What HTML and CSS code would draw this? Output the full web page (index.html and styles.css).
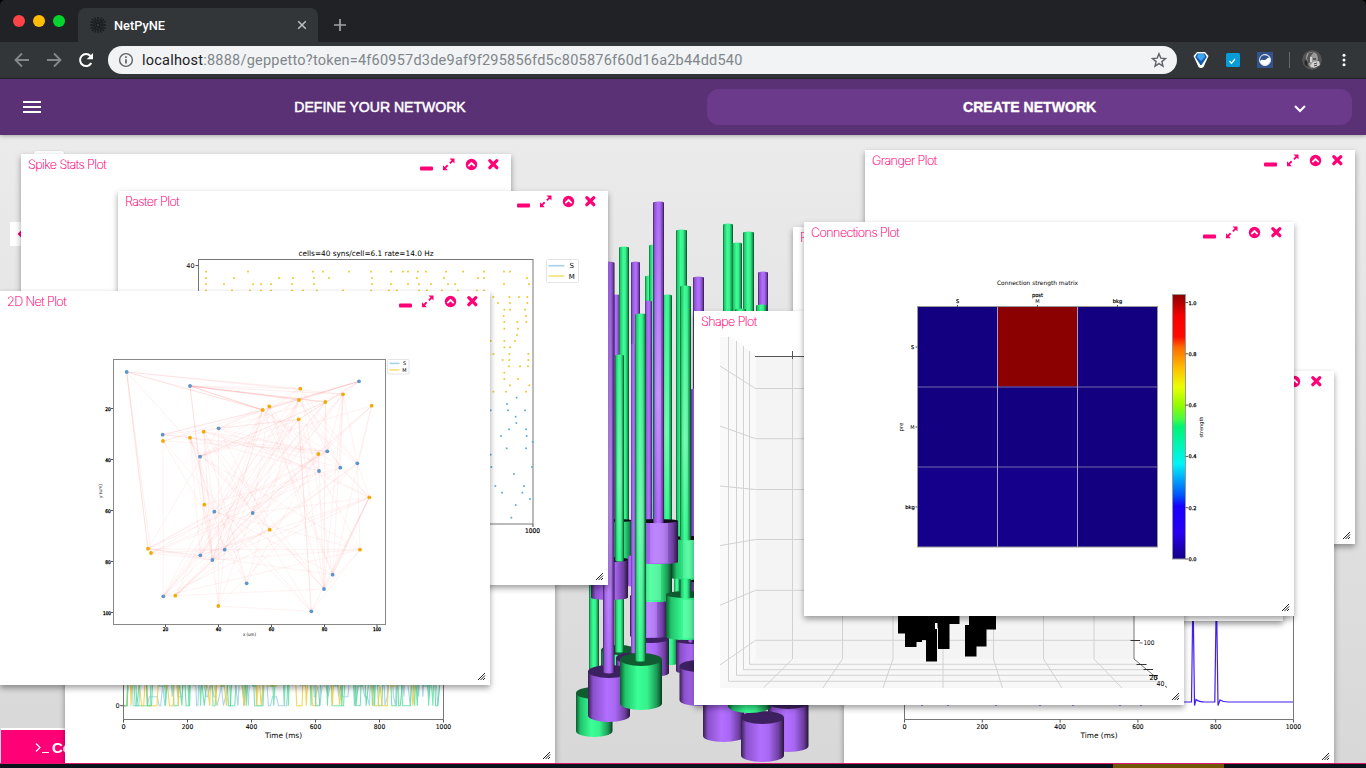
FILE: index.html
```html
<!DOCTYPE html>
<html lang="en">
<head>
<meta charset="utf-8">
<title>NetPyNE</title>
<link rel="stylesheet" href="styles.css">
</head>
<body>
<div class="browser">
  <div class="tabstrip">
    <div class="lights"><i class="red"></i><i class="amber"></i><i class="green"></i></div>
    <div class="tab">
      <svg class="favicon" width="18" height="18" viewBox="0 0 18 18"><g stroke="#181a1c" stroke-width="1.3" fill="none"><path d="M9 1v5M9 12v5M1 9h5M12 9h5M3 3l4 4M11 11l4 4M15 3l-4 4M7 11l-4 4M5.500 1.500l2 4M12.500 1.500l-2 4M5.500 16.500l2-4M12.500 16.500l-2-4M1.500 5.500l4 2M1.500 12.500l4-2M16.500 5.500l-4 2M16.500 12.500l-4-2"/><circle cx="9" cy="9" r="2"/></g></svg>
      <span class="tab-title">NetPyNE</span>
      <svg width="10" height="10" viewBox="0 0 10 10"><path d="M1.200 1.200l7.600 7.600M8.800 1.200L1.200 8.800" stroke="#bdc1c6" stroke-width="1.500"/></svg>
    </div>
    <svg class="newtab" width="14" height="14" viewBox="0 0 14 14"><path d="M7 1v12M1 7h12" stroke="#a0a3a7" stroke-width="1.700"/></svg>
  </div>
  <div class="toolbar">
    <svg class="nav" width="16" height="16" viewBox="0 0 16 16"><path d="M15 8H2M8 1.500L1.500 8 8 14.500" fill="none" stroke="#85888b" stroke-width="1.800"/></svg>
    <svg class="nav" width="16" height="16" viewBox="0 0 16 16"><path d="M1 8h13M8 1.500L14.500 8 8 14.500" fill="none" stroke="#85888b" stroke-width="1.800"/></svg>
    <svg class="nav" width="16" height="16" viewBox="0 0 16 16"><path d="M13.300 11A6 6 0 1 1 12.500 4" fill="none" stroke="#fff" stroke-width="2"/><path d="M15 1v6.300H8.700z" fill="#fff"/></svg>
    <div class="address">
      <svg width="16" height="16" viewBox="0 0 16 16"><circle cx="8" cy="8" r="6.400" fill="none" stroke="#5f6368" stroke-width="1.400"/><path d="M8 7.200v4.300M8 4.300v1.700" stroke="#5f6368" stroke-width="1.700"/></svg>
      <span class="url"><b>localhost</b>:8888/geppetto?token=4f60957d3de9af9f295856fd5c805876f60d16a2b44dd540</span>
      <svg width="16" height="16" viewBox="0 0 16 16"><path d="M8 1.700l1.800 4.400 4.700.4-3.600 3.100 1.100 4.600L8 11.700l-4 2.500 1.100-4.600L1.500 6.500l4.700-.4z" fill="none" stroke="#5f6368" stroke-width="1.400"/></svg>
    </div>
    <svg class="ext1" width="16" height="18" viewBox="0 0 16 18"><path d="M4 1h8l3.500 4L10.500 16q-2.500 2-5 0L.5 5z" fill="#fff"/><path d="M4.200 2.500h7.600L13.800 6 8.600 14h-1.200L2.200 6z" fill="#1559ae"/><path d="M5 3h6l1 3-4 4-4-4z" fill="#3fa4ee"/></svg>
    <svg class="ext2" width="14" height="14" viewBox="0 0 14 14"><rect width="14" height="14" rx="1.500" fill="#079cd8"/><path d="M3.500 8l2 2.300L9 6" fill="none" stroke="#fff" stroke-width="1.200"/></svg>
    <svg class="ext3" width="16" height="16" viewBox="0 0 16 16"><rect width="16" height="16" fill="#34528c"/><circle cx="8" cy="8" r="5.500" fill="#fff" stroke="#dce4f2"/><path d="M3.300 9.500c1-3 2.600-1 4.700-1.500s2-3 4.500-2A5 5 0 0 0 3 8z" fill="#34528c"/></svg>
    <i class="divider"></i>
    <svg class="avatar" width="20" height="20" viewBox="0 0 20 20"><circle cx="10" cy="10" r="10" fill="#555"/><path d="M4 8q0-7 7-6 5 1 5 7l-2 7-5 2-3-4z" fill="#999"/><path d="M5 8l2-5 5-1-4 5 1 4-3 3zM11 8h3v2h-3z" fill="#555"/><path d="M11 12l6-1 1 4-6 3-4-2zM8 7h2v5H8z" fill="#d2d2d2"/><path d="M2 10l3 1 1 6-3-2zM12 14l3-1M12 16l3-1" fill="#222" stroke="#444"/></svg>
    <svg class="kebab" width="4" height="16" viewBox="0 0 4 16"><g fill="#fff"><circle cx="2" cy="3.200" r="1.500"/><circle cx="2" cy="8" r="1.500"/><circle cx="2" cy="12.800" r="1.500"/></g></svg>
  </div>
  <div class="appbar">
    <svg class="burger" width="18" height="12" viewBox="0 0 18 12"><path d="M0 1h18M0 6h18M0 11h18" stroke="#fff" stroke-width="2"/></svg>
    <div class="step"><span class="define">DEFINE YOUR NETWORK</span></div>
    <div class="step active"><span class="create">CREATE NETWORK</span>
      <svg class="chev" width="12" height="8" viewBox="0 0 12 8"><path d="M1 1l5 5 5-5" fill="none" stroke="#fff" stroke-width="2"/></svg></div>
  </div>
  <main class="stage">
    <svg class="scene" id="scene" width="1366" height="629" viewBox="0 135 1366 629"></svg>
    <div class="home"></div>
    <div class="pan"><svg width="11" height="10" viewBox="0 0 11 10"><path d="M7.500 5L11 1.500v7z" fill="#ff0077"/></svg></div>
    <div class="console"><svg width="15" height="12" viewBox="0 0 15 12"><path d="M1 1.500l4 4-4 4M7 10.500h7" fill="none" stroke="#fff" stroke-width="1.200"/></svg><span>Console</span></div>
    <div id="windows"></div>
  </main>
  <div class="desktop"><i></i></div>
</div>
<script src="plots.js"></script>
</body>
</html>
```
FILE: styles.css
```css
* { box-sizing: border-box; }
body { margin: 0; background: #000; font-family: "Liberation Sans", Arial, sans-serif; overflow: hidden; }
svg { display: block; flex: none; }
.browser { width: 1366px; height: 768px; display: flex; flex-direction: column; overflow: hidden; border-radius: 5px 5px 0 0; }
.tabstrip { height: 42px; background: #202225; display: flex; align-items: flex-end; }
.lights { width: 78px; height: 42px; padding-left: 13px; display: flex; gap: 8px; align-items: center; }
.lights i { width: 12px; height: 12px; border-radius: 50%; }
.red { background: #ff4447; }
.amber { background: #ffbd03; }
.green { background: #05d42f; }
.tab { width: 240px; height: 34px; padding: 0 11px 0 11px; background: #323639; border-radius: 8px 8px 0 0; display: flex; align-items: center; }
.tab-title { flex: 1; margin-left: 7px; color: #fff; font: 500 12.8px Roboto, sans-serif; }
.newtab { margin: 0 0 10px 15px; }
.toolbar { height: 37px; background: #323639; border-bottom: 1px solid #25282a; display: flex; align-items: center; padding-left: 14px; }
.nav { margin-right: 16px; }
.nav:nth-child(3) { margin-right: 14px; }
.address { width: 1069px; height: 28px; padding: 0 10px; border-radius: 14px; background: #f1f3f4; display: flex; align-items: center; }
.url { flex: 1; margin-left: 8px; color: #80868b; font: 14.5px Roboto, sans-serif; white-space: nowrap; letter-spacing: .22px; }
.url b { color: #202124; font-weight: 400; }
.ext1 { margin-left: 16px; }
.ext2 { margin-left: 17px; }
.ext3 { margin-left: 17px; }
.divider { width: 1px; height: 16px; margin: 0 13px 0 16px; background: #66696c; }
.avatar { border-radius: 50%; margin-left: -1px; }
.kebab { margin-left: 20px; }
.appbar { height: 56px; background: #5b3176; display: flex; align-items: center; padding: 0 14px 0 23px; box-shadow: 0 1px 4px rgba(0,0,0,.3); z-index: 2; color: #fff; }
.burger { margin-right: 12px; }
.step { width: 654px; height: 36px; display: flex; align-items: center; justify-content: center; font-size: 14.05px; white-space: nowrap; }
.define { -webkit-text-stroke: .5px #fff; }
.active { width: 645px; padding-left: 256px; justify-content: flex-start; background: #6c3a8a; border-radius: 12px; font-weight: bold; }
.create { width: 133px; -webkit-text-stroke: .35px #fff; }
.chev { margin: 4px 0 0 198px; }
.stage { position: relative; height: 629px; background: linear-gradient(#ebebeb, #d8d8d8); border-bottom: 1px solid #df176f; overflow: hidden; }
.scene { position: absolute; left: 0; top: 0; }
.home { position: absolute; left: 34px; top: 16px; width: 30px; height: 30px; background: #fff; border-radius: 2px; box-shadow: 0 0 2px rgba(0,0,0,.15); }
.pan { position: absolute; left: 10px; top: 87px; width: 24px; height: 24px; background: #fff; display: flex; align-items: center; }
.console { position: absolute; left: 1px; top: 594px; width: 150px; height: 36px; padding-left: 34px; background: #ff0077; border-top: 1px solid #fff; box-shadow: 0 -1px 0 #fff; color: #fff; display: flex; align-items: center; gap: 2px; font-size: 15px; font-weight: bold; }
.win { position: absolute; width: 490px; height: 394px; background: #fff; box-shadow: 0 3px 6px rgba(0,0,0,.38); }
.win h2 { position: absolute; left: 7px; top: 3px; margin: 0; color: #ff0077; font: 250 12.6px/16px Inter, sans-serif; letter-spacing: -.6px; -webkit-text-stroke: .12px #ff0077; white-space: nowrap; }
.desktop { height: 4px; background: #09131b; padding-left: 1113px; }
.desktop i { display: block; width: 111px; height: 4px; background: #735606; }
text { font-family: "DejaVu Sans", sans-serif; }
```
FILE: plots.js
```js
const PURPLE = 'url(#purple)', GREEN = 'url(#green)';
const line = (x1, y1, x2, y2, c = '#555', w = 1, o = 1) =>
  `<line x1="${x1}" y1="${y1}" x2="${x2}" y2="${y2}" stroke="${c}" stroke-width="${w}" opacity="${o}"/>`;
const label = (x, y, t, s = 6.5, len = 0, extra = '') =>
  `<text x="${x}" y="${y}" font-size="${s}" text-anchor="middle" ${len ? `textLength="${len}" lengthAdjust="spacingAndGlyphs"` : ''} ${extra}>${t}</text>`;
let seed = 7;
const rand = () => (seed = (seed * 16807) % 2147483647) / 2147483647;

/* 3D network: vertical dendrites and cylindrical somas, back to front */
const grad = (id, stops) => `<linearGradient id="${id}">${stops.map(([o, c]) => `<stop offset="${o}" stop-color="${c}"/>`).join('')}</linearGradient>`;
function bar(c, x1, x2, top, bottom) {
  const r = (x2 - x1) / 2;
  return `<path d="M${x1} ${top + 1}a${r} 1.500 0 0 1 ${2 * r} 0V${bottom}a${r} 1.500 0 0 1 ${-2 * r} 0z" fill="${c}"/>`;
}
function soma(c, x1, x2, top, bottom, ry) {
  const r = (x2 - x1) / 2, dark = c === PURPLE ? '#3d2060' : '#105c30';
  return `<path d="M${x1} ${top + ry}V${bottom - ry}a${r} ${ry} 0 0 0 ${2 * r} 0V${top + ry}z" fill="${c}"/>` +
    `<ellipse cx="${x1 + r}" cy="${top + ry}" rx="${r}" ry="${ry}" fill="${ry < 3 ? '#101018' : dark}"/>`;
}
document.getElementById('scene').innerHTML =
  `<defs>${grad('purple', [[0, '#38204f'], [.12, '#8a50cb'], [.45, '#b26fff'], [.65, '#a767f2'], [.88, '#6d3e9f'], [1, '#281638']])}
  ${grad('green', [[0, '#0c5c2e'], [.12, '#20c36b'], [.42, '#3bff96'], [.65, '#36f18b'], [.88, '#1b9855'], [1, '#0a3c20']])}
  <linearGradient id="glow" x2="0" y2="1"><stop offset="0" stop-color="#fff" stop-opacity="0"/><stop offset=".6" stop-color="#fff" stop-opacity=".28"/><stop offset="1" stop-color="#fff" stop-opacity="0"/></linearGradient></defs>` +
  bar(PURPLE, 693, 704, 277, 560) + bar(GREEN, 723, 733, 224, 500) + bar(GREEN, 732, 742, 243, 500) +
  bar(GREEN, 743, 754, 232, 500) + bar(PURPLE, 758, 768, 272, 500) + bar(GREEN, 756, 767, 305, 500) + bar(GREEN, 735, 746, 309, 500) +
  bar(PURPLE, 611, 620, 295, 560) + bar(GREEN, 619, 629, 247, 530) + bar(PURPLE, 631, 640, 262, 652) +
  bar(GREEN, 645, 653, 276, 530) + bar(GREEN, 649, 658, 245, 530) + bar(PURPLE, 645, 652, 301, 530) +
  bar(GREEN, 662, 672, 295, 530) + bar(GREEN, 676, 687, 230, 545) + bar(PURPLE, 691, 698, 389, 540) +
  soma(GREEN, 606, 632, 519, 560, 1.5) + bar(PURPLE, 628, 632, 556, 585) +
  soma(GREEN, 672, 710, 536, 580, 2) + bar(GREEN, 674, 680, 579, 600) + bar(GREEN, 680, 691, 286, 539) + soma(PURPLE, 690, 725, 579, 596, 2) +
  bar(GREEN, 680, 691, 579, 598) +
  soma(GREEN, 661, 678, 625, 665, 2) + soma(PURPLE, 632, 669, 635, 677, 4) + soma(PURPLE, 676, 712, 638, 674, 3) + bar(PURPLE, 688, 693, 630, 641) +
  soma(PURPLE, 630, 667, 594, 638, 2) +
  soma(GREEN, 635, 672, 555, 602, 2) + soma(GREEN, 666, 708, 591, 640, 3.5) + bar(GREEN, 680, 691, 580, 597) +
  soma(PURPLE, 636, 678, 519, 564, 2) + bar(PURPLE, 653, 664, 202, 522) +
  bar(GREEN, 589, 599, 560, 672) + soma(GREEN, 601, 636, 645, 690, 5) + bar(GREEN, 615, 624, 590, 651) + soma(PURPLE, 616, 640, 653, 690, 5) +
  soma(PURPLE, 591, 628, 557, 600, 2.5) + bar(GREEN, 615, 624, 355, 560) + bar(PURPLE, 631, 636, 344, 652) +
  soma(GREEN, 576, 612.5, 687, 737, 6) + soma(PURPLE, 588, 630, 665, 722, 6.5) + bar(PURPLE, 603, 614.5, 262, 672) +
  soma(GREEN, 620, 662, 653, 710, 6.5) + bar(GREEN, 635, 646, 314, 660) +
  soma(PURPLE, 679.500, 718, 660, 706, 6) + soma(PURPLE, 725, 760, 690, 740, 6) + soma(PURPLE, 703, 744, 690, 742, 6) +
  soma(PURPLE, 768, 808.500, 697, 752, 6) + soma(PURPLE, 741, 784, 711, 762, 6.5) + soma(GREEN, 728, 771, 670, 713, 7) +
  '<g fill="url(#glow)"><rect x="605" y="270" width="7" height="395"/><rect x="617" y="360" width="5" height="195"/><rect x="637" y="320" width="7" height="335"/><rect x="655" y="205" width="6" height="315"/><rect x="664" y="300" width="5" height="220"/><rect x="682" y="290" width="6" height="248"/></g>' +
  '<g fill="#fff" opacity=".16"><rect x="650" y="523" width="18" height="40"/><rect x="647" y="564" width="14" height="36"/><rect x="647" y="601" width="10" height="36"/><rect x="683" y="540" width="11" height="38"/><rect x="683" y="600" width="11" height="38"/></g>';

/* Raster */
const rows = {
  271.600: [206, 248, 313, 323, 349, 371, 391, 403, 408, 418, 426, 446, 463, 484, 504, 510],
  278: [206, 234, 279, 293, 314, 329, 372, 417, 444, 478, 484, 527],
  284.200: [206, 224, 253, 261, 271, 292, 314, 372, 391, 408, 419, 431, 448, 455, 504, 529],
  290.500: [206, 232, 250, 261, 271, 292, 303, 317, 343, 371, 389, 397, 419, 427, 442, 458, 477, 484]
};
const late = '130,111 144,129 178,111 207,111 232,111 180,129 232,129 163,149 180,149 225,149 161,168 228,168 163,186 202,186 229,186 163,206 204,206 201,225 122,243 163,243 195,243 163,262 180,262 130,282 178,282 235,282 158,300 178,300 235,300 177,319 210,319 234,319 163,338 163,357 204,357 180,376 238,376 130,395 168,395 228,395 200,413 171,432 122,451 174,451 225,451 197,470 199,489 177,508 228,508 153,528 230,528 248,546 170,565 228,565 122,584 124,621 246,621 192,642 136,678 222,678 156,698 217,698 240,717 197,735 184,773'
  .split(' ').map(p => p.split(',').map(Number));
const spike = (x, y, c) => `<rect x="${x - .85}" y="${y - .85}" width="1.700" height="1.700" fill="${c}"/>`;
const legend = (x, y, w, h, s) => `<rect x="${x}" y="${y}" width="${w}" height="${h}" rx="1" fill="#fff" stroke="#ddd" stroke-width=".8"/>` +
  line(x + 2, y + h * .27, x + w * .56, y + h * .27, '#a6d3e9', 1.6) + line(x + 2, y + h * .72, x + w * .56, y + h * .72, '#f3d95b', 1.3) +
  label(x + w * .79, y + h * .27 + s * .37, 'S', s) + label(x + w * .79, y + h * .72 + s * .37, 'M', s);
const raster = '<rect x="198.500" y="259.500" width="334.500" height="264.500" fill="none" stroke="#777"/>' +
  Object.entries(rows).map(([y, xs]) => xs.map(x => spike(x, +y, '#ecc522')).join('')).join('') +
  late.map(([x, y]) => spike(450 + x / 3, 260 + y / 3, y < 400 ? '#ecc522' : '#58a8d8')).join('') +
  label(366, 255.500, 'cells=40 syns/cell=6.1 rate=14.0 Hz', 7.5, 135) + label(190.500, 268, '40', 6.5) + line(195.500, 265.500, 198.500, 265.500) +
  label(532.500, 533, '1000', 6.5, 15, 'stroke="#000" stroke-width=".2"') + line(533, 524, 533, 527) + legend(546.500, 259.500, 32, 23, 7);

/* 2D network */
const S = '140,96 330,138 837,124 248,284 416,265 360,350 742,334 717,393 781,383 832,370 403,515 518,519 434,629 361,646 397,660 500,730 758,704 732,747 250,769 694,814';
const M = '661,146 789,163 657,180 736,186 875,197 568,199 548,210 656,238 371,275 330,293 249,303 715,342 373,494 868,472 569,569 204,626 213,639 840,629 286,767 415,798';
const pts = s => s.split(' ').map(p => p.split(',').map((v, i) => (i ? 340 : 80) + v / 3));
const sp = pts(S), mp = pts(M);
let edges = '';
sp.forEach((a, i) => mp.forEach((b, j) => {
  const d = Math.hypot(a[0] - b[0], a[1] - b[1]);
  if (i === 0 || (i < 4 && b[1] > 480)) return;
  if (rand() < (d < 230 ? .5 : .25)) edges += line(a[0], a[1], b[0], b[1], '#ff3b3b', 1, .06);
}));
[[0, 15], [0, 15], [0, 16], [0, 0], [0, 1], [0, 6], [0, 6], [0, 14], [1, 1], [1, 2], [1, 3], [1, 3], [1, 6], [1, 6], [1, 12], [1, 12], [2, 6], [2, 6], [2, 7], [3, 6], [17, 3], [19, 7], [16, 13], [17, 13], [12, 6], [14, 8]].forEach(([i, j]) => edges += line(...sp[i], ...mp[j], '#ff3b3b', 1, .08));
const dot = c => ([x, y]) => `<circle cx="${x}" cy="${y}" r="1.900" fill="${c}"/>`;
const net2d = '<rect x="113.500" y="359.500" width="272" height="265" fill="none" stroke="#888"/>' + edges +
  sp.map(dot('#5d96c8')).join('') + mp.map(dot('#f0ac05')).join('') +
  [['20', 408.500], ['40', 459.500], ['60', 510.500], ['80', 561.500], ['100', 612.500]].map(([t, y]) => line(111, y, 113, y) + label(t === '100' ? 107 : 108, y + 2, t, 5, t === '100' ? 8 : 5.500, 'stroke="#000" stroke-width=".3"')).join('') +
  [['20', 165.500], ['40', 218.500], ['60', 271.500], ['80', 324.500], ['100', 377]].map(([t, x]) => line(x, 624.500, x, 627) + label(x, 630.500, t, 5, t === '100' ? 8 : 5.500, 'stroke="#000" stroke-width=".3"')).join('') +
  label(249.500, 636, 'x (um)', 4.500, 13) + label(0, 0, 'y (um)', 4.500, 14, 'transform="translate(101.500 491) rotate(-90)"') + legend(387.500, 359.500, 21.500, 14.500, 5);

/* Time axes shared by the histogram and the trace */
const timeAxis = (x1, x2, top) => line(x1, top, x1, 719.500, '#777') + line(x2, top, x2, 719.500, '#777') + line(x1, 719.500, x2, 719.500, '#777') +
  [0, 1, 2, 3, 4, 5].map(i => { const x = x1 + (x2 - x1) * i / 5; return line(x, 719.500, x, 722.500) + label(x, 729, i * 200, 6.500, i ? (i === 5 ? 15.500 : 11.500) : 0, 'stroke="#000" stroke-width=".12"'); }).join('') +
  label((x1 + x2) / 2, 738, 'Time (ms)', 7.500, 37);
function wave(c, levels) {
  let d = 'M124 705.700H127', x = 129;
  while (x < 438) {
    const y = levels[Math.floor(rand() * levels.length)];
    d += `L${x} ${y}`;
    if (rand() < .25) { x += 1 + rand() * 5; d += `H${x}`; }
    x += 2.1;
  }
  return `<path d="${d}L441 670" fill="none" stroke="${c}" stroke-width="1.100" opacity=".85"/>`;
}
const hist = wave('#9dd0e6', [696.7, 686, 670, 650, 705.7]) + wave('#64e0a6', [705.7, 705.7, 670, 650, 640]) + wave('#f2cf3f', [705.7, 686, 670, 660, 640]) + wave('#5cd8a0', [705.7, 686, 660, 640, 640]) +
  timeAxis(123.500, 443.500, 600) + label(117.500, 708, '0', 6.500) + line(120, 705.700, 123.500, 705.700);
const trace = '<path d="M905 702H1191.500L1193 590 1194.500 705.500 1196 699.500Q1199 702 1205 702H1214.800L1216.400 590 1218 705.500 1220 700Q1223 702 1228 702H1293.500" fill="none" stroke="#4020f0" stroke-width="1.200"/>' +
  [922, 948, 996, 1040, 1073, 1120, 1141].map(x => line(x, 703, x, 706, '#4020f0')).join('') + timeAxis(904.500, 1293.500, 600);

/* Morphology */
const g = (a, b, c, d) => line(a, b, c, d, '#d2d2d2');
const shape = '<path d="M720 337h11L755.500 356V659L720 688z" fill="#f9f9f9"/><path d="M755.500 356H1134V659H755.500z" fill="#f4f4f4"/><path d="M755.500 659H1134L1163 688H720z" fill="#f7f7f7"/>' +
  [[366, 388.500], [426, 438.700], [486, 489.500], [545.600, 539.500], [605.300, 590.300], [665, 640.300]].map(([a, b]) => g(720, a, 755.500, b) + g(755.500, b, 1134, b)).join('') +
  [[728.500, 337, 681.300, 1164], [736.500, 341, 675.300, 1154], [743.500, 346, 669.700, 1148], [749.500, 351, 664.300, 1141]].map(([x, t, b, r]) => g(x, t, x, b) + g(x, b, r, b)).join('') +
  [[792.500, 763.300], [842.500, 822.800], [893, 883], [943, 943], [993.500, 1002.500], [1043.500, 1062], [1094, 1122]].map(([a, b]) => g(a, 356, a, 659) + g(a, 659, b, 688)).join('') +
  line(755, 356.500, 1134, 356.500) + line(792.500, 351, 792.500, 359) + line(1134, 356, 1134, 659, '#777') + line(1134, 659, 1158, 679, '#777') +
  line(1130.500, 640.500, 1140, 640.500, '#333') + line(1136.500, 664.500, 1146.500, 664.500, '#333') + line(1143.500, 669.500, 1153, 669.500, '#333') + line(1149, 675.500, 1158, 675.500, '#333') +
  '<path d="M898 600H959.500V624H949.500V649H938V628H937V661.600H926V640H922V642H916.500V647H905V633.500H898zM969 600H996V629.600H986.500V646.600H976.500V656.600H965V625H969z"/><path d="M935 623h2.500v6H935z" fill="#fff"/>' +
  label(1146.500, 644.500, '−100', 6.500, 16) + label(1153.500, 680, '20', 6.500, 8, 'stroke="#000" stroke-width=".2"') + label(1160.500, 685.500, '40', 6.500, 8) + line(1165, 686, 1167, 687.500);

/* Connectivity matrix */
let conn = '<defs><linearGradient id="jet" x1="0" y1="1" x2="0" y2="0">' +
  [[0, '#150085'], [.1, '#2900f2'], [.2, '#1800ff'], [.24, '#0053ff'], [.36, '#00f5f7'], [.5, '#00f574'], [.53, '#49fb41'], [.58, '#91fb00'], [.65, '#eaff00'], [.72, '#ffc000'], [.8, '#ff6c00'], [.84, '#ff0b00'], [.92, '#f60000'], [1, '#8b0000']].map(([o, c]) => `<stop offset="${o}" stop-color="${c}"/>`).join('') + '</linearGradient></defs>' +
  '<rect x="917.500" y="307" width="240" height="240" fill="#120081"/><rect x="917.500" y="467" width="160" height="80" fill="#15008b"/><rect x="997.500" y="307" width="80" height="80" fill="#8b0000"/>';
conn += [387, 467].map(y => line(917.500, y, 1157.500, y, '#55449b', 1.600)).join('') + [997.500, 1077.500].map(x => line(x, 307, x, 547, '#a69dca')).join('') +
  '<rect x="917.500" y="306.500" width="240" height="240.500" fill="none" stroke="#999"/><rect x="1172.500" y="294.500" width="13" height="264.500" fill="url(#jet)" stroke="#999"/>' +
  label(1037.500, 285, 'Connection strength matrix', 6, 81) + label(1037.500, 296.500, 'post', 5.500, 11, 'stroke="#000" stroke-width=".15"') +
  label(957.500, 303, 'S', 5, 0, 'stroke="#000" stroke-width=".2"') + label(1037.500, 303, 'M', 5) + label(1117.500, 303, 'bkg', 5, 9.500, 'stroke="#000" stroke-width=".2"') +
  label(912.500, 349, 'S', 5, 0, 'stroke="#000" stroke-width=".2"') + label(912.500, 429, 'M', 5) + label(910, 509, 'bkg', 5, 9.500, 'stroke="#000" stroke-width=".2"') +
  label(0, 0, 'pre', 5.500, 9, 'transform="translate(903 427) rotate(-90)"') + label(0, 0, 'strength', 5, 21, 'transform="translate(1203 427) rotate(-90)"') +
  [957.500, 1037.500, 1117.500].map(x => line(x, 305, x, 307)).join('') + [347, 427, 507].map(y => line(915.500, y, 917.500, y)).join('') +
  [0, 1, 2, 3, 4, 5].map(i => { const y = 559 - i * 51.300; return line(1185.500, y, 1188, y) + label(1192.500, y + 2, (i / 5).toFixed(1), 5, 8, 'stroke="#000" stroke-width=".25"'); }).join('');

const controls = '<g fill="#ff0077"><rect x="399" y="12.600" width="13" height="3.900" rx="1"/><path d="M428.500 4.500h5v5l-1.700-1.700-2.300 2.300-1.300-1.300 2.300-2.300zM422 16.200v-5l1.700 1.700 2.300-2.300 1.300 1.300-2.300 2.300 1.700 2z"/><circle cx="450.500" cy="10.500" r="5.700"/></g>' +
  '<path d="M447.300 12.200l3.200-3.100 3.200 3.100" fill="none" stroke="#fff" stroke-width="1.800"/><path d="M468.800 6.700l7 7M475.800 6.700l-7 7" stroke="#ff0077" stroke-width="3.300" stroke-linecap="round"/>';
const grip = '<path d="M478 389l7-7M480.500 389l4.500-4.500M483 389l2-2" stroke="#222" stroke-width="1" fill="none"/>';
const wins = [
  [65, 370, '', hist], [21, 154, 'Spike Stats Plot', ''], [118, 191, 'Raster Plot', raster], [0, 291, '2D Net Plot', net2d],
  [865, 150, 'Granger Plot', ''], [844, 371, '', trace], [793, 227, 'P', ''], [694, 311, 'Shape Plot', shape], [804, 222, 'Connections Plot', conn]
];
document.getElementById('windows').innerHTML = wins.map(([x, y, t, body]) =>
  `<section class="win" style="left:${x}px;top:${y - 135}px"><h2>${t}</h2><svg width="490" height="394" viewBox="0 0 490 394">${controls}${grip}<g transform="translate(${-x} ${-y})">${body}</g></svg></section>`).join('');
```
